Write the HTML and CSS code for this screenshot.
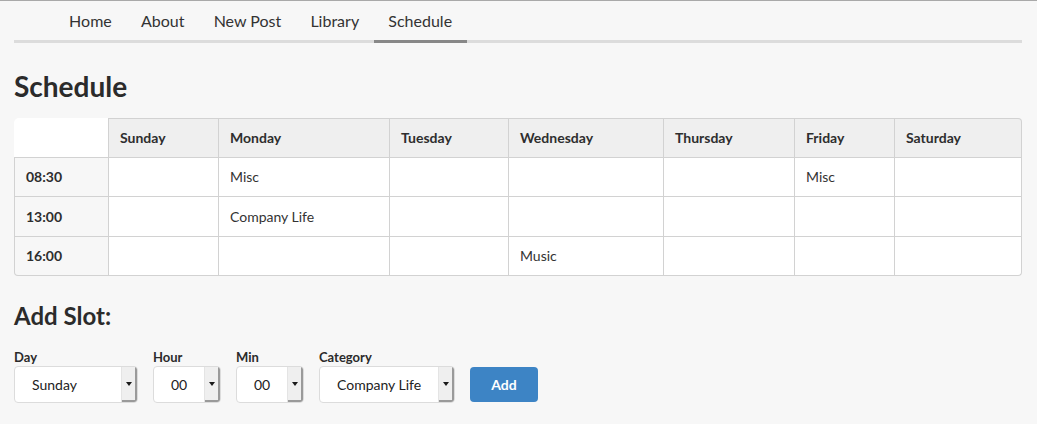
FILE: index.html
```html
<!DOCTYPE html>
<html>
<head>
<meta charset="utf-8">
<link rel="stylesheet" href="styles.css">
</head>
<body>
<div class="page">
  <nav class="nav">
    <ul class="nav-list">
      <li><a class="nav-link">Home</a></li>
      <li><a class="nav-link">About</a></li>
      <li><a class="nav-link">New Post</a></li>
      <li><a class="nav-link">Library</a></li>
      <li><a class="nav-link active">Schedule</a></li>
    </ul>
  </nav>

  <h1 class="title">Schedule</h1>

  <table class="schedule">
    <colgroup>
      <col class="c-time"><col class="c-sun"><col class="c-mon"><col class="c-tue"><col class="c-wed"><col class="c-thu"><col class="c-fri"><col class="c-sat">
    </colgroup>
    <thead>
      <tr>
        <th class="corner"></th>
        <th>Sunday</th><th>Monday</th><th>Tuesday</th><th>Wednesday</th><th>Thursday</th><th>Friday</th><th class="last">Saturday</th>
      </tr>
    </thead>
    <tbody>
      <tr>
        <td class="time">08:30</td><td></td><td>Misc</td><td></td><td></td><td></td><td>Misc</td><td></td>
      </tr>
      <tr class="tall-row">
        <td class="time">13:00</td><td></td><td>Company Life</td><td></td><td></td><td></td><td></td><td></td>
      </tr>
      <tr class="last-row">
        <td class="time">16:00</td><td></td><td></td><td></td><td>Music</td><td></td><td></td><td></td>
      </tr>
    </tbody>
  </table>

  <h2 class="subtitle">Add Slot:</h2>

  <form class="slot-form">
    <div class="field">
      <label class="label">Day</label>
      <div class="select w-day"><span class="select-value">Sunday</span><span class="select-arrow"><i class="tri"></i></span></div>
    </div>
    <div class="field">
      <label class="label">Hour</label>
      <div class="select w-small"><span class="select-value">00</span><span class="select-arrow"><i class="tri"></i></span></div>
    </div>
    <div class="field">
      <label class="label">Min</label>
      <div class="select w-small"><span class="select-value">00</span><span class="select-arrow"><i class="tri"></i></span></div>
    </div>
    <div class="field">
      <label class="label">Category</label>
      <div class="select w-cat"><span class="select-value">Company Life</span><span class="select-arrow"><i class="tri"></i></span></div>
    </div>
    <button type="button" class="btn">Add</button>
  </form>
</div>
</body>
</html>
```

FILE: styles.css
```css
html, body {
  margin: 0;
  padding: 0;
}
body {
  background: #f7f7f7;
  border-top: 1px solid #a9a9a9;
  font-family: Lato, "Open Sans", sans-serif;
  color: #333;
}
.page {
  margin: 0 15px 0 14px;
}
.nav {
  border-bottom: 3px solid #dcdcdc;
}
.nav-list {
  list-style: none;
  margin: 0;
  padding: 0 0 0 40.5px;
  display: flex;
}
.nav-link {
  display: block;
  height: 39px;
  line-height: 39px;
  padding: 0 14.6px;
  font-size: 16px;
  color: #333;
}
.nav-link.active {
  border-bottom: 3px solid #888;
  margin-bottom: -3px;
}
.title {
  font-size: 28px;
  font-weight: 700;
  line-height: 34px;
  margin: 26px 0 15px;
  color: #2b2b2b;
}
.schedule {
  width: 1008px;
  table-layout: fixed;
  border-collapse: separate;
  border-spacing: 0;
  font-size: 14px;
}
.c-time { width: 95px; }
.c-sun { width: 110px; }
.c-mon { width: 171px; }
.c-tue { width: 119px; }
.c-wed { width: 155px; }
.c-thu { width: 131px; }
.c-fri { width: 100px; }
.c-sat { width: 127px; }
.schedule th, .schedule td {
  text-align: left;
  padding: 9px 11px;
  line-height: 20px;
  height: 20px;
  border-right: 1px solid #d2d2d2;
  border-bottom: 1px solid #d2d2d2;
  background: #fff;
  color: #333;
}
.schedule .tall-row td {
  padding-top: 10px;
}
.schedule th {
  background: #efefef;
  border-top: 1px solid #d2d2d2;
  font-weight: 700;
  color: #2e2e2e;
  height: 19px;
}
.schedule th.corner {
  background: #fff;
  border-top: none;
  border-top-left-radius: 5px;
  padding-top: 10px;
}
.schedule th.last {
  border-top-right-radius: 4px;
}
.schedule td.time {
  border-left: 1px solid #d2d2d2;
  background: #f7f7f7;
  font-weight: 700;
  color: #2e2e2e;
}
.last-row td:first-child {
  border-bottom-left-radius: 4px;
}
.last-row td:last-child {
  border-bottom-right-radius: 4px;
}
.subtitle {
  font-size: 24px;
  font-weight: 700;
  line-height: 29px;
  margin: 25px 0 19px;
  color: #2b2b2b;
}
.slot-form {
  display: flex;
  align-items: flex-end;
  gap: 15px;
}
.field {
  display: flex;
  flex-direction: column;
}
.label {
  font-size: 13px;
  font-weight: 700;
  line-height: 16px;
  margin-bottom: 1px;
  color: #2b2b2b;
}
.select {
  display: flex;
  height: 37px;
  box-sizing: border-box;
  background: #fff;
  border: 1px solid #dcdcdc;
  border-radius: 4px;
  overflow: hidden;
}
.w-day { width: 124px; }
.w-small { width: 68px; }
.w-cat { width: 136px; }
.select-value {
  flex: 1;
  padding-left: 17px;
  font-size: 14px;
  line-height: 35px;
  color: #222;
}
.select-arrow {
  width: 13px;
  background: #efefef;
  border-left: 1px solid #e4e4e4;
  box-shadow: inset -2px -2px 0 #9a9a9a;
  display: flex;
  align-items: center;
  justify-content: center;
  padding-right: 2px;
  padding-bottom: 1px;
}
.tri {
  display: block;
  width: 0;
  height: 0;
  border-left: 3px solid transparent;
  border-right: 3px solid transparent;
  border-top: 4px solid #1a1a1a;
}
.btn {
  width: 68px;
  height: 35px;
  margin-bottom: 1px;
  border: none;
  border-radius: 4px;
  background: #3d84c5;
  color: #fff;
  font-family: Lato, "Open Sans", sans-serif;
  font-weight: 700;
  font-size: 14px;
}
```
